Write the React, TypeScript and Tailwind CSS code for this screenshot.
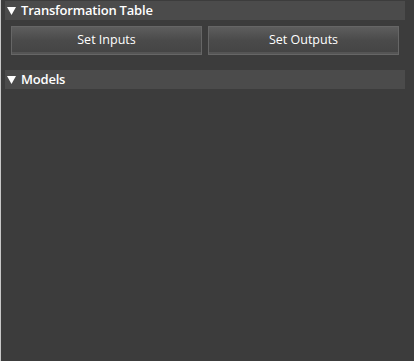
import React from "react";

const font = { fontFamily: '"Open Sans", "Noto Sans", "DejaVu Sans", sans-serif' };

function Caret() {
  return (
    <svg width="9" height="8" viewBox="0 0 9 8" className="shrink-0">
      <path d="M0 0 H9 L4.5 8 Z" fill="#ffffff" />
    </svg>
  );
}

function SectionHeader({ title }: { title: string }) {
  return (
    <div className="flex items-center h-[19px] bg-[#4b4b4b] pl-[2px] gap-[5px]">
      <Caret />
      <span className="text-[13px] font-semibold tracking-[-0.2px] text-white leading-none">{title}</span>
    </div>
  );
}

function PanelButton({ label }: { label: string }) {
  return (
    <button className="flex-1 h-[29px] border border-[#666666] bg-gradient-to-b from-[#5e5e5e] via-[#4a4a4a] to-[#444444] shadow-[inset_0_-2px_0_#555555] text-white text-[12.5px] leading-none">
      {label}
    </button>
  );
}

export default function App() {
  return (
    <div
      className="w-[414px] h-[361px] bg-[#3c3c3c] border-l border-[#c8c8c8] pl-[4px] pr-[9px] pt-[1px]"
      style={font}
    >
      <SectionHeader title="Transformation Table" />
      <div className="flex gap-[6px] px-[6px] mt-[6px]">
        <PanelButton label="Set Inputs" />
        <PanelButton label="Set Outputs" />
      </div>
      <div className="mt-[15px]">
        <SectionHeader title="Models" />
      </div>
    </div>
  );
}
